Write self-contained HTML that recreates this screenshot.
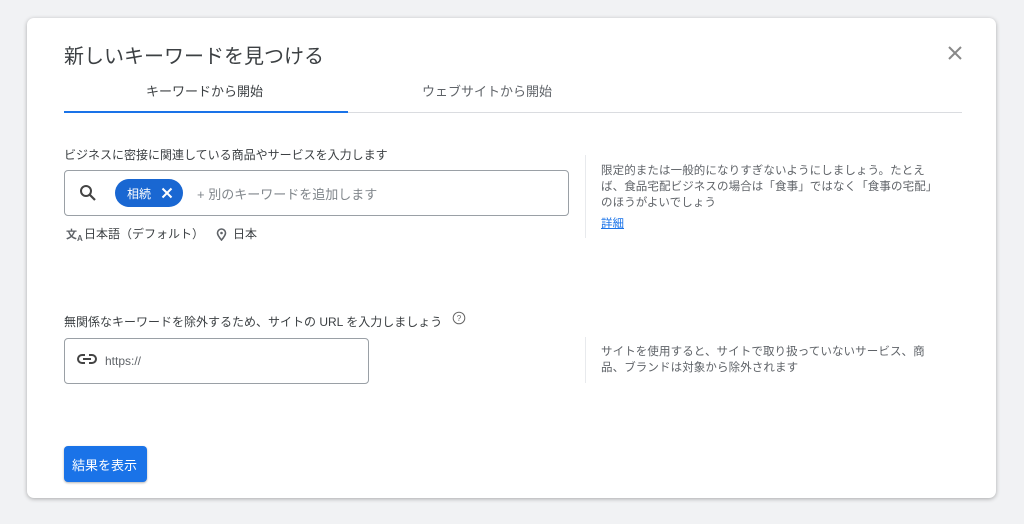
<!DOCTYPE html>
<html><head><meta charset="utf-8"><style>
*{margin:0;padding:0;box-sizing:border-box}
body{width:1024px;height:524px;background:#f1f2f4;font-family:"Liberation Sans","Noto Sans CJK JP",sans-serif;position:relative;overflow:hidden;color:#3c4043}
.card{position:absolute;left:27px;top:18px;width:969px;height:480px;background:#fff;border-radius:7px;box-shadow:0 1px 4px rgba(0,0,0,.3)}
.a{position:absolute;white-space:nowrap}
</style></head><body>
<div class="card"></div>
<div class="a" style="left:64px;top:40px;font-size:20px;color:#3c4043">新しいキーワードを見つける</div>
<svg class="a" style="left:948px;top:46px" width="14" height="14" viewBox="0 0 14 14"><path d="M1 1L13 13M13 1L1 13" stroke="#888" stroke-width="2"/></svg>
<div class="a" style="left:146px;top:81px;font-size:13px;color:#3c4043">キーワードから開始</div>
<div class="a" style="left:422px;top:81px;font-size:13px;color:#5f6368">ウェブサイトから開始</div>
<div class="a" style="left:64px;top:112px;width:898px;height:1px;background:#dadce0"></div>
<div class="a" style="left:64px;top:111px;width:284px;height:2px;background:#1a73e8"></div>
<div class="a" style="left:64px;top:146px;font-size:12px;color:#3c4043">ビジネスに密接に関連している商品やサービスを入力します</div>
<div class="a" style="left:64px;top:170px;width:505px;height:46px;border:1px solid #9aa0a6;border-radius:4px"></div>
<svg class="a" style="left:79px;top:184px" width="18" height="18" viewBox="0 0 18 18"><circle cx="7" cy="7" r="5" stroke="#444" stroke-width="2" fill="none"/><path d="M10.5 10.5L16 16" stroke="#444" stroke-width="2.2"/></svg>
<div class="a" style="left:115px;top:179px;width:68px;height:28px;background:#1967d2;border-radius:14px"></div>
<div class="a" style="left:127px;top:185px;font-size:12px;color:#fff">相続</div>
<svg class="a" style="left:161px;top:187px" width="12" height="12" viewBox="0 0 12 12"><path d="M1.5 1.5L10.5 10.5M10.5 1.5L1.5 10.5" stroke="#fff" stroke-width="2"/></svg>
<div class="a" style="left:197px;top:184px;font-size:13px;color:#80868b">+ 別のキーワードを追加します</div>
<div class="a" style="left:66px;top:226px;font-size:11px;font-weight:bold;color:#5f6368">文<sub style="font-size:8px">A</sub></div>
<div class="a" style="left:84px;top:225px;font-size:12px;color:#3c4043">日本語（デフォルト）</div>
<svg class="a" style="left:216px;top:228px" width="11" height="13" viewBox="0 0 11 13"><path d="M5.5 12C2 8 1.5 6.5 1.5 5a4 4 0 018 0c0 1.5-.5 3-4 7z" stroke="#5f6368" stroke-width="1.6" fill="none"/><circle cx="5.5" cy="5" r="1.3" fill="#5f6368"/></svg>
<div class="a" style="left:233px;top:225px;font-size:12px;color:#3c4043">日本</div>
<div class="a" style="left:585px;top:155px;width:1px;height:83px;background:#e8eaed"></div>
<div class="a" style="left:601px;top:163px;font-size:11.5px;line-height:16px;color:#5f6368;letter-spacing:.1px">限定的または一般的になりすぎないようにしましょう。たとえ<br>ば、食品宅配ビジネスの場合は「食事」ではなく「食事の宅配」<br>のほうがよいでしょう</div>
<div class="a" style="left:601px;top:215px;font-size:11.5px;color:#1a73e8;text-decoration:underline">詳細</div>
<div class="a" style="left:64px;top:313px;font-size:12px;color:#3c4043">無関係なキーワードを除外するため、サイトの URL を入力しましょう</div>
<svg class="a" style="left:452px;top:311px" width="14" height="14" viewBox="0 0 14 14"><circle cx="7" cy="7" r="5.8" stroke="#666" fill="none"/><text x="7" y="10" font-size="8" text-anchor="middle" fill="#666" font-family="Liberation Sans">?</text></svg>
<div class="a" style="left:64px;top:338px;width:305px;height:46px;border:1px solid #9aa0a6;border-radius:4px"></div>
<svg class="a" style="left:77px;top:353px" width="20" height="12" viewBox="0 0 20 12"><path d="M8 2H5a4 4 0 000 8h3M12 2h3a4 4 0 010 8h-3M6 6h8" stroke="#444" stroke-width="2" fill="none"/></svg>
<div class="a" style="left:105px;top:354px;font-size:12px;color:#5f6368">https://</div>
<div class="a" style="left:585px;top:337px;width:1px;height:46px;background:#e8eaed"></div>
<div class="a" style="left:601px;top:344px;font-size:11.5px;line-height:16px;color:#5f6368;letter-spacing:.1px">サイトを使用すると、サイトで取り扱っていないサービス、商<br>品、ブランドは対象から除外されます</div>
<div class="a" style="left:64px;top:446px;width:83px;height:36px;background:#1a73e8;border-radius:4px;box-shadow:0 1px 2px rgba(0,0,0,.3)"></div>
<div class="a" style="left:72px;top:455px;font-size:13px;color:#fff">結果を表示</div>
</body></html>
